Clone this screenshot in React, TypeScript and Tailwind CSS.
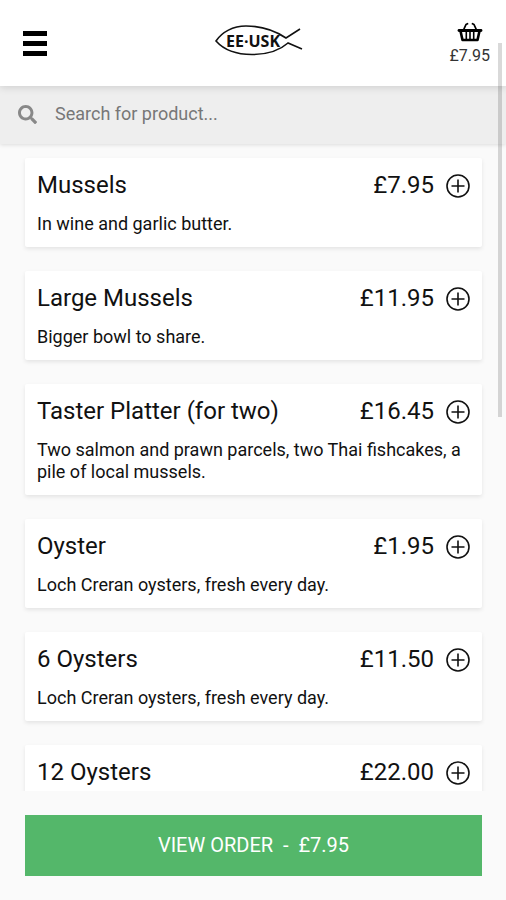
import { FaSearch } from "react-icons/fa";

type Product = { name: string; price: string; description?: string };

const products: Product[] = [
  { name: "Mussels", price: "£7.95", description: "In wine and garlic butter." },
  { name: "Large Mussels", price: "£11.95", description: "Bigger bowl to share." },
  {
    name: "Taster Platter (for two)",
    price: "£16.45",
    description: "Two salmon and prawn parcels, two Thai fishcakes, a pile of local mussels.",
  },
  { name: "Oyster", price: "£1.95", description: "Loch Creran oysters, fresh every day." },
  { name: "6 Oysters", price: "£11.50", description: "Loch Creran oysters, fresh every day." },
  { name: "12 Oysters", price: "£22.00" },
];

function Logo() {
  return (
    <svg width="90" height="34" viewBox="0 0 90 34" role="img" aria-label="EE-USK" fill="none" stroke="#111" strokeWidth="1.6">
      <path d="M86 5L72 14C60 6 46 2 32 2C19 2 8 8 2 17C10 26 23 30.500 38 30.500C54 30.500 65 27 74 19L88 25" />
      <text x="12" y="23" fontSize="16" fontWeight="700" fill="#111" stroke="none" className="font-['Open_Sans',sans-serif]">
        EE·USK
      </text>
    </svg>
  );
}

function BasketIcon() {
  return (
    <svg width="26" height="20" viewBox="0 0 26 20" fill="none" stroke="#000" strokeLinejoin="round" strokeLinecap="round" aria-hidden="true">
      <path d="M2 8.500H24" strokeWidth="2.800" />
      <path d="M3.500 9L5.500 18H20.500L22.500 9" strokeWidth="2.600" />
      <path d="M9.300 10V17M13 10V17M16.700 10V17" strokeWidth="1.600" />
      <path d="M6.500 8L9 2.500L10.500 1.800M19.500 8L17 2.500L15.500 1.800" strokeWidth="1.800" />
    </svg>
  );
}

function ProductCard({ name, price, description }: Product) {
  return (
    <li className="flex flex-col gap-3 rounded-xs bg-white p-3 shadow-[0_2px_4px_rgba(0,0,0,0.09)]">
      <div className="flex items-center text-2xl/[31px]">
        <h2 className="flex-1">{name}</h2>
        <span>{price}</span>
        <button type="button" aria-label={`Add ${name}`} className="ml-3">
          <svg width="24" height="24" viewBox="0 0 24 24" fill="none" stroke="#111" strokeWidth="1.6">
            <circle cx="12" cy="12" r="11" />
            <path d="M12 5.500V18.500M5.500 12H18.500" />
          </svg>
        </button>
      </div>
      {description && <p className="text-lg/[22px]">{description}</p>}
    </li>
  );
}

export default function App() {
  return (
    <div className="relative flex h-screen flex-col bg-[#fafafa] font-[Roboto,sans-serif] text-[#111]">
      <header className="z-10 grid h-[86px] shrink-0 grid-cols-3 items-center bg-white px-4 shadow-[0_1px_8px_rgba(0,0,0,0.15)]">
        <button type="button" aria-label="Menu" className="ml-[7px] flex w-6 flex-col gap-[5px]">
          <span className="h-[5px] bg-black" />
          <span className="h-[5px] bg-black" />
          <span className="h-[5px] bg-black" />
        </button>
        <a href="#home" className="mb-1 ml-3 justify-self-center">
          <Logo />
        </a>
        <a href="#basket" className="flex flex-col items-center gap-1 justify-self-end pt-0.5 text-base/5 text-[#333]">
          <BasketIcon />
          £7.95
        </a>
      </header>
      <label className="flex h-[58px] shrink-0 items-center gap-[18px] bg-[#eee] px-[18px] pb-0.5 text-[#777] shadow-[0_1px_4px_rgba(0,0,0,0.12)]">
        <FaSearch size={19} color="#888" />
        <input
          type="search"
          aria-label="Search for product"
          placeholder="Search for product..."
          className="min-w-0 flex-1 bg-transparent text-lg outline-none placeholder:text-[#777]"
        />
      </label>
      <main className="min-h-0 flex-1 overflow-hidden pt-3.5 pr-6 pl-[25px]">
        <ul className="flex flex-col gap-6">
          {products.map((p) => (
            <ProductCard key={p.name} {...p} />
          ))}
        </ul>
      </main>
      <footer className="py-6 pr-6 pl-[25px]">
        <button type="button" className="block h-[61px] w-full bg-[#54b76a] pb-0.5 text-xl whitespace-pre text-white">
          {"VIEW ORDER  -  £7.95"}
        </button>
      </footer>
      <div className="absolute top-[43px] right-1 z-20 h-[374px] w-1 bg-black/15" />
    </div>
  );
}
